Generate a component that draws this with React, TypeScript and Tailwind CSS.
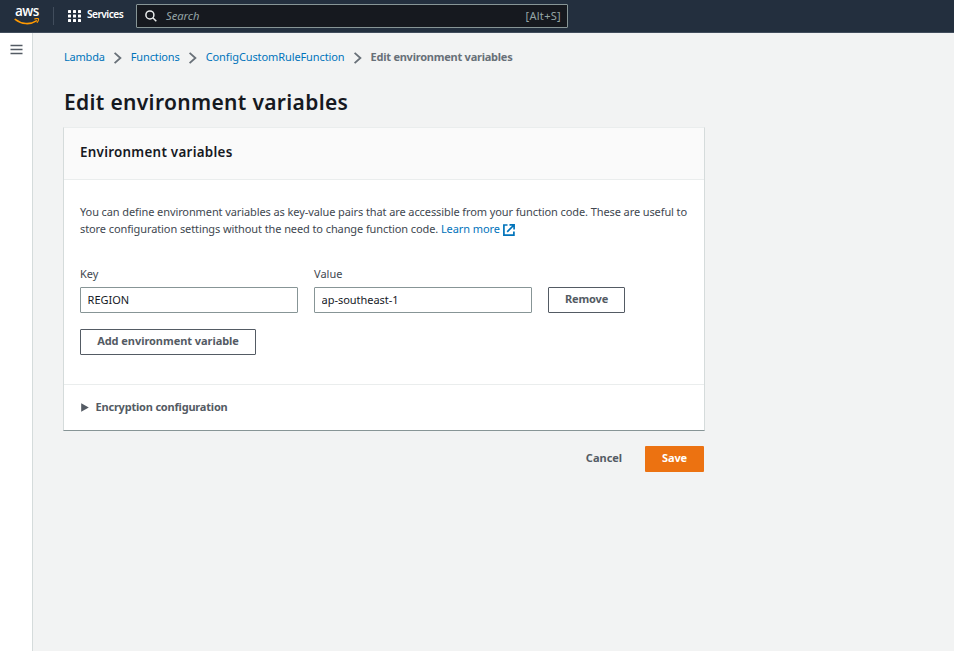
const crumbs = [
  { label: "Lambda", cls: "tracking-[-0.2px]" },
  { label: "Functions", cls: "tracking-[-0.13px]" },
  { label: "ConfigCustomRuleFunction", cls: "tracking-[-0.1px]" },
];

function Chevron() {
  return (
    <svg className="mx-[8px] h-[12px] w-[10px] shrink-0" viewBox="0 0 10 12" fill="none" stroke="#687078" strokeWidth="1.8">
      <path d="M1.6 0.8 L7.4 6 L1.6 11.2" />
    </svg>
  );
}

function AwsLogo() {
  return (
    <div className="flex h-[18px] w-[26px] flex-col items-center">
      <span className="h-[10px] font-['Open_Sans',sans-serif] text-[13.5px] leading-[7px] font-semibold tracking-[-0.5px] text-white">aws</span>
      <svg className="h-[8px] w-[26px]" viewBox="0 0 26 8" fill="none" stroke="#f90" strokeLinecap="round">
        <path d="M1.2 1.4 C7.5 6.4 16 7 22.4 2.9" strokeWidth="1.6" />
        <path d="M20.6 0.9 C22.5 0.3 24.2 0.4 24.5 1 C24.7 1.8 24.3 3.2 23.2 4.4" strokeWidth="1.1" />
      </svg>
    </div>
  );
}

function Header() {
  return (
    <header className="flex h-[33px] items-start border-b border-[#414d5c] bg-[#232f3e]">
      <div className="mt-[8px] ml-[14px]">
        <AwsLogo />
      </div>
      <div className="mt-[7px] ml-[13px] h-[18px] w-px bg-[#414d5c]" />
      <svg className="mt-[10px] ml-[14px] h-[12px] w-[13px]" viewBox="0 0 13 12" fill="#fff">
        {[0, 5, 10].map((x) => [0, 4.5, 9].map((y) => <rect key={`${x}-${y}`} x={x} y={y} width="3" height="3" rx="0.6" />))}
      </svg>
      <span className="mt-[6px] ml-[6px] w-[37px] text-[10.2px] leading-[17px] font-semibold tracking-[-0.55px] whitespace-nowrap text-white">Services</span>
      <div className="mt-[4px] ml-[12px] flex h-[24px] w-[432px] items-center rounded-[1px] border border-[#879596] bg-[#16191f] pr-[6px] pl-[8px]">
        <svg className="h-[12px] w-[12px]" viewBox="0 0 12 12" fill="none" stroke="#eaeded" strokeWidth="1.5">
          <circle cx="4.9" cy="4.9" r="4" />
          <path d="M7.8 7.8 L11.3 11.3" />
        </svg>
        <span className="ml-[9px] text-[11.2px] leading-[16px] text-[#95a5a6] italic">Search</span>
        <span className="ml-auto text-[11px] leading-[16px] tracking-[0.3px] text-[#95a5a6]">[Alt+S]</span>
      </div>
    </header>
  );
}

function Field({ label, value }: { label: string; value: string }) {
  return (
    <label className="flex w-[218px] flex-col">
      <span className="text-[11px] leading-[17px] text-[#414750]">{label}</span>
      <input
        defaultValue={value}
        className="mt-[5px] h-[26px] w-full rounded-[1px] border border-[#879596] bg-white px-[6.6px] pb-[2px] text-[11px] tracking-[-0.04px] text-[#16191f] outline-none"
      />
    </label>
  );
}

export default function App() {
  return (
    <div className="flex h-[651px] w-[954px] flex-col overflow-hidden bg-[#f2f3f3] font-['Noto_Sans',sans-serif] text-[11px] text-[#16191f]">
      <Header />
      <div className="flex flex-1">
        <aside className="w-[33px] border-r border-[#d5dbdb] bg-white">
          <svg className="mt-[11px] ml-[10px] h-[11px] w-[13px]" viewBox="0 0 13 11" stroke="#545b64" strokeWidth="1.4">
            <path d="M0.5 1.5 H12.5 M0.5 5.5 H12.5 M0.5 9.5 H12.5" />
          </svg>
        </aside>
        <main className="ml-[30px] w-[642px]">
          <nav className="mt-[16px] flex h-[17px] items-center pl-[1px] whitespace-nowrap">
            {crumbs.map((c) => (
              <div key={c.label} className="flex items-center">
                <a className={`text-[#0073bb] ${c.cls}`}>{c.label}</a>
                <Chevron />
              </div>
            ))}
            <span className="font-bold tracking-[-0.24px] text-[#687078]">Edit environment variables</span>
          </nav>
          <h1 className="mt-[21px] pl-[1px] text-[21px] leading-[30px] font-semibold tracking-[0.33px] whitespace-nowrap">Edit environment variables</h1>
          <section className="mt-[10px] flex h-[304px] w-[642px] flex-col border border-t-[#eaeded] border-r-[#d5dbdb] border-b-[#879596] border-l-[#d5dbdb] bg-white">
            <div className="flex h-[52px] items-center border-b border-[#eaeded] bg-[#fafafa] px-[16px] pb-[2px]">
              <h2 className="text-[13.4px] font-semibold tracking-[0.27px]">Environment variables</h2>
            </div>
            <div className="px-[16px] pt-[23px] whitespace-nowrap">
              <p className="text-[11px] leading-[17px] tracking-[-0.097px] text-[#414750]">
                You can define environment variables as key-value pairs that are accessible from your function code. These are useful to
                <br />
                store configuration settings without the need to change function code.{" "}
                <a className="text-[#0073bb]">
                  Learn more
                  <svg className="ml-[3px] inline-block h-[12px] w-[12px] align-[-3px]" viewBox="0 0 12 12" fill="none" stroke="#0073bb" strokeWidth="1.7">
                    <path d="M4.5 1 H0.9 V11.1 H10.9 V7.5 M6.5 0.9 H11.1 V5.5 M11 1 L4.2 7.8" />
                  </svg>
                </a>
              </p>
              <div className="mt-[28px] flex items-end gap-[16px]">
                <Field label="Key" value="REGION" />
                <Field label="Value" value="ap-southeast-1" />
                <button className="h-[26px] w-[77px] rounded-[1px] border border-[#545b64] bg-white pb-[2px] text-[11px] font-bold tracking-[-0.15px] text-[#545b64]">Remove</button>
              </div>
              <button className="mt-[16px] h-[26px] w-[176px] rounded-[1px] border border-[#545b64] bg-white pb-[2px] text-[11px] font-bold tracking-[-0.05px] text-[#545b64]">Add environment variable</button>
            </div>
            <div className="mt-auto flex h-[46px] items-center border-t border-[#eaeded] pl-[17px] font-bold text-[#545b64]">
              <svg className="h-[9px] w-[8px]" viewBox="0 0 8 9" fill="#545b64">
                <path d="M0.2 0.3 L7.8 4.5 L0.2 8.7 Z" />
              </svg>
              <span className="ml-[6.5px] tracking-[-0.2px]">Encryption configuration</span>
            </div>
          </section>
          <div className="mt-[15px] flex justify-end pr-[1px]">
            <button className="h-[26px] w-[82px] pb-[2px] font-bold tracking-[0px] text-[#545b64]">Cancel</button>
            <button className="h-[26px] w-[59px] rounded-[1px] bg-[#ec7211] pb-[2px] font-bold tracking-[-0.1px] text-white">Save</button>
          </div>
        </main>
      </div>
    </div>
  );
}
